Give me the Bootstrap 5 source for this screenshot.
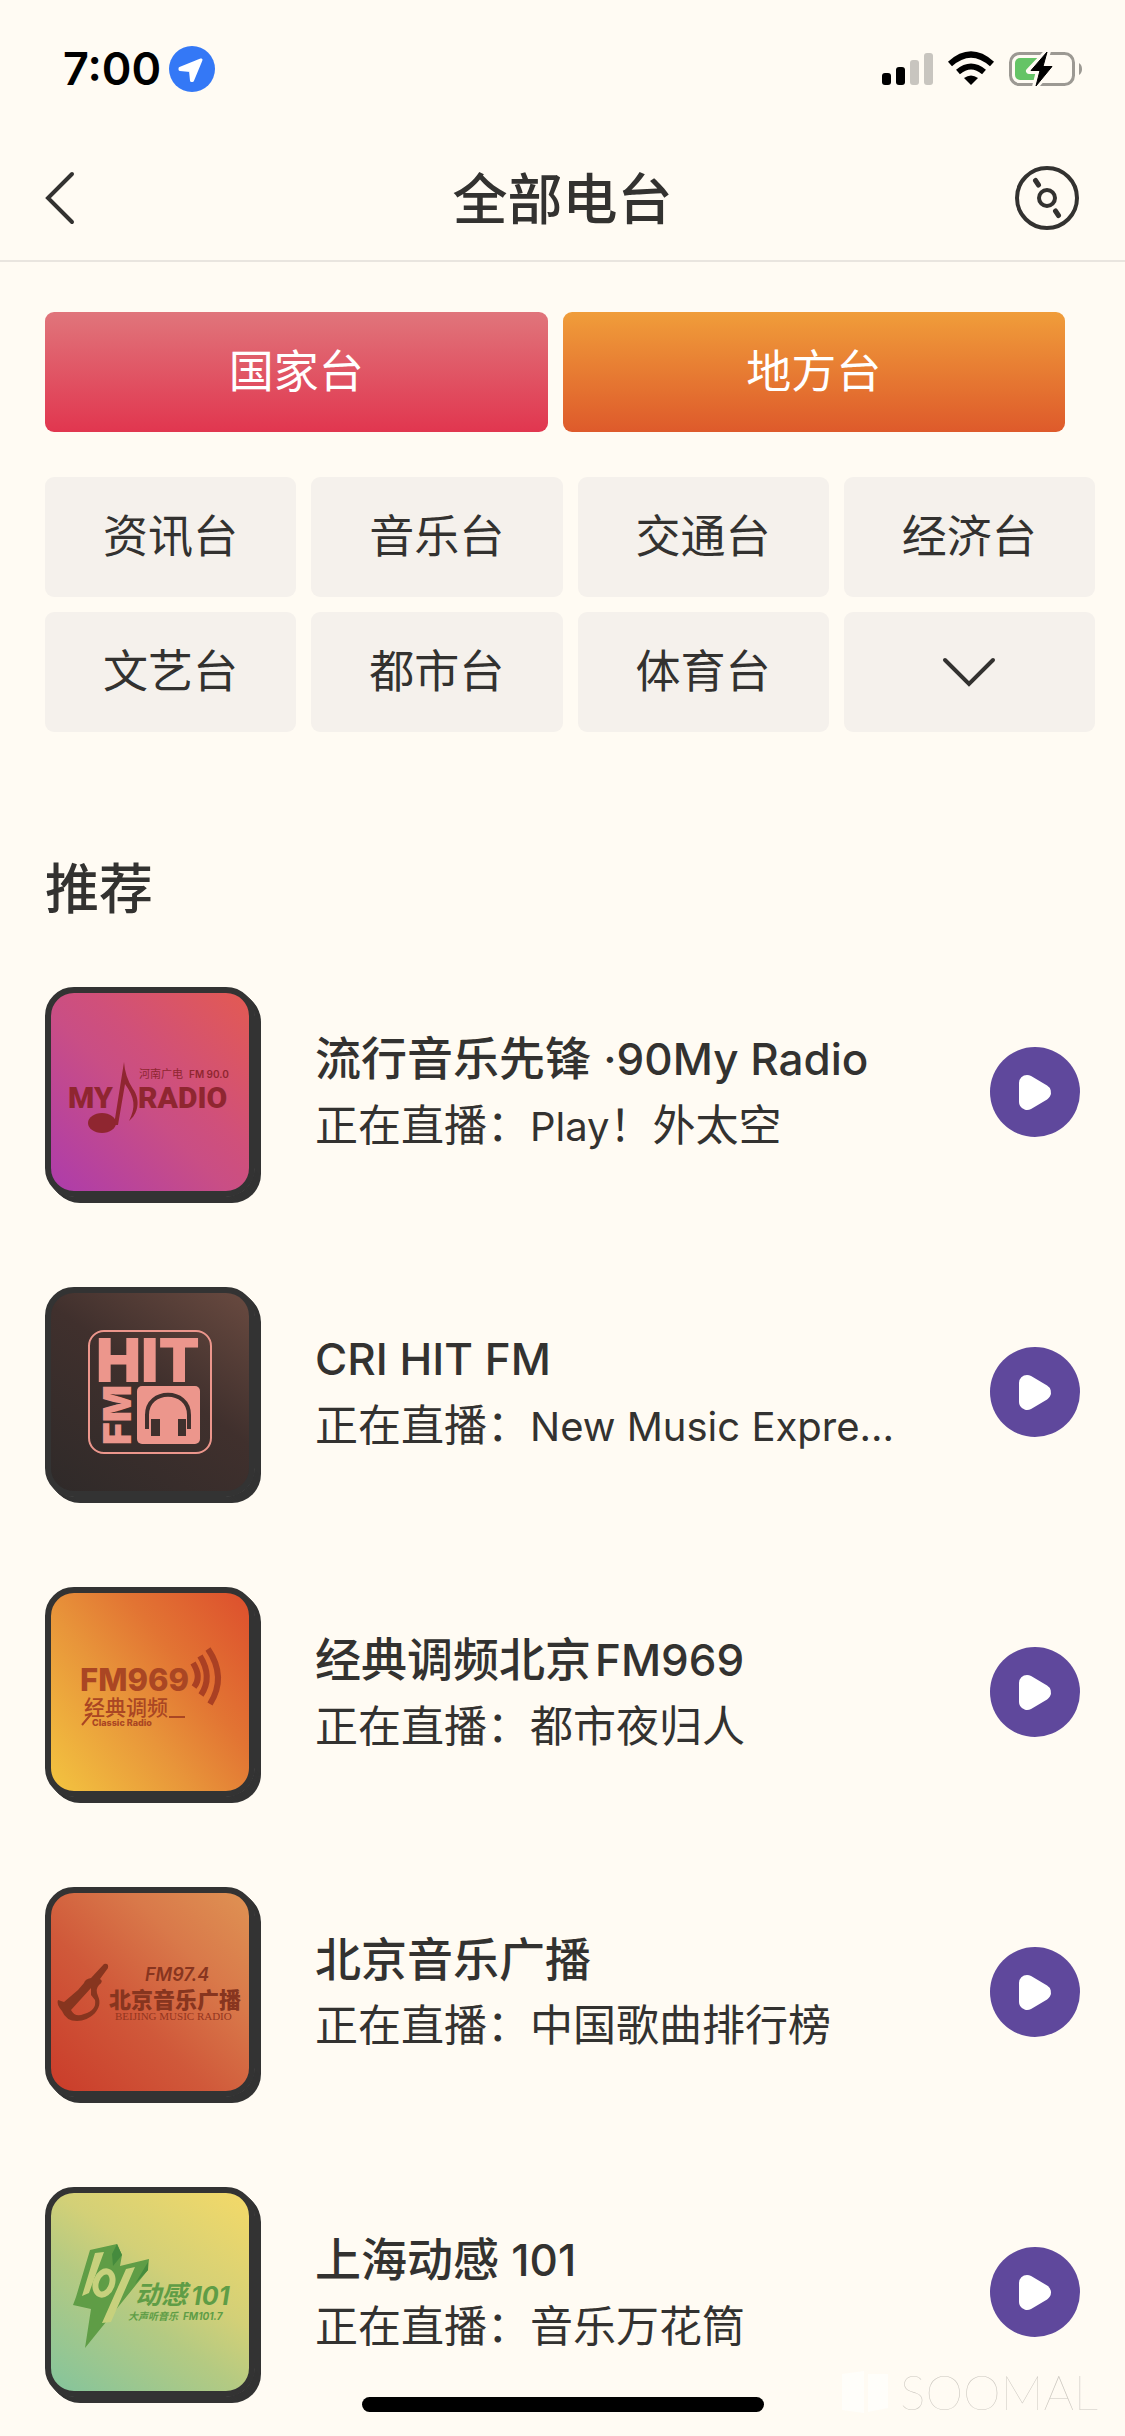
<!DOCTYPE html>
<html lang="zh-CN">
<head>
<meta charset="utf-8">
<meta name="viewport" content="width=device-width, initial-scale=1">
<title>全部电台</title>
<link href="https://cdn.jsdelivr.net/npm/bootstrap@5.3.0/dist/css/bootstrap.min.css" rel="stylesheet">
<style>
  body {
    background: #fffbf3;
    color: #333230;
    font-family: Inter, "Noto Sans CJK SC", sans-serif;
    font-size: 45px;
    line-height: 60px;
  }
  svg { display: block; flex: none; }
  .status-bar { height: 138px; padding: 0 43px 0 63px; color: #000; }
  .status-time { font-size: 45px; font-weight: 600; }
  .app-header { height: 124px; padding: 0 45px; border-bottom: 2px solid #e9e5df; }
  .header-side { width: 70px; }
  .icon-btn { border: 0; background: none; padding: 0; color: inherit; }
  .page-title { font-size: 55px; font-weight: 500; line-height: 72px; }
  .region-row { gap: 15px; padding: 50px 60px 45px 45px; }
  .region-btn, .kind-btn { height: 120px; border: 0; border-radius: 9px; padding: 0; font-size: 45px; line-height: 60px; }
  .region-btn, .region-btn:hover { color: #fff; }
  .region-national { background: linear-gradient(#e0757b, #e1364f); }
  .region-local { background: linear-gradient(#f09d3a, #de5a2b); }
  .kind-grid { display: grid; grid-template-columns: repeat(4, 1fr); gap: 15px; padding: 0 30px 0 45px; }
  .kind-btn { background: #f5f1ec; color: #333230; }
  .section-title { font-size: 54px; font-weight: 500; line-height: 72px; padding: 122px 45px 0; }
  .station-list { padding: 61px 45px 39px; gap: 90px; }
  .cover { width: 210px; height: 210px; border: 6px solid #333; border-radius: 29px; box-shadow: 1px 1px #333, 2px 2px #333, 3px 3px #333, 4px 4px #333, 5px 5px #333, 6px 6px #333; overflow: hidden; margin-right: 60px; }
  .cover-my { background: linear-gradient(45deg, #ad3cab, #c94e85 45%, #d0507a 60%, #e35a52); }
  .cover-hit { background: linear-gradient(35deg, #2f2a29, #40302d 55%, #694a40); }
  .cover-969 { background: linear-gradient(52deg, #f3c440, #e8953a 40%, #e27433 65%, #dd4f2d); }
  .cover-974 { background: linear-gradient(45deg, #ca3c2a, #d0593a 40%, #d9794a 70%, #df9253); }
  .cover-101 { background: linear-gradient(35deg, #84c49c, #b4ca82 40%, #d3d077 60%, #f4d968); }
  .station-name { font-size: 46px; font-weight: 500; line-height: 60px; margin: 0; }
  .station-name .latin { font-size: 44px; }
  .station-live { font-size: 43px; line-height: 60px; margin: 6px 0 0; }
  .station-live .latin { font-size: 40px; }
  .play-btn { width: 90px; height: 90px; border-radius: 50%; background: #5f489c; }
  .home-bar { position: fixed; left: 50%; bottom: 24px; width: 402px; height: 15px; margin-left: -201px; border-radius: 8px; background: #000; }
  .watermark { position: fixed; right: 27px; bottom: 14px; gap: 8px; color: #ccc8c0; font-family: Lato, sans-serif; font-weight: 100; font-size: 48px; line-height: 60px; }
</style>
</head>
<body>
<div class="status-bar d-flex align-items-center justify-content-between">
  <div class="d-flex align-items-center gap-2">
    <span class="status-time">7:00</span>
    <svg width="46" height="46" viewBox="0 0 46 46"><circle cx="23" cy="23" r="23" fill="#3478f6"/><path d="M32 14 11 22.500V23.500L21.500 24.500 22.500 34.500H23.500Z" fill="#fff" stroke="#fff" stroke-width="3" stroke-linejoin="round"/></svg>
  </div>
  <svg width="202" height="36" viewBox="0 0 202 36">
    <g><rect x="2" y="22" width="9" height="12" rx="3"/><rect x="16" y="16" width="9" height="18" rx="3"/><rect x="30" y="9" width="9" height="25" rx="3" fill="#c8c5bf"/><rect x="44" y="2" width="9" height="32" rx="3" fill="#c8c5bf"/></g>
    <path d="M91 34 84 27Q91 22 98 27Z"/>
    <path d="M78 21Q91 10 104 21M70 13Q91-6 112 13" fill="none" stroke="#000" stroke-width="6"/>
    <rect x="130.500" y="2.500" width="63" height="31" rx="9" fill="none" stroke="#9c9993" stroke-width="3"/>
    <rect x="135" y="7" width="30" height="22" rx="5" fill="#65c466"/>
    <path d="M199 12Q202 14 202 18T199 24Z" fill="#9c9993"/>
    <path d="M168 0 149 20H159L155 36 174 15H163.500Z" stroke="#fffbf3" stroke-width="6" stroke-linejoin="round"/><path d="M167 1 151 19.500H160L156 35 172 15.500H163Z" stroke="#000" stroke-linejoin="round"/>
  </svg>
</div>
<header class="app-header d-flex align-items-center justify-content-between">
  <div class="header-side d-flex"><button class="icon-btn" type="button" aria-label="返回"><svg width="32" height="56" viewBox="0 0 32 56"><path d="M27 3 3 27 27 51" fill="none" stroke="currentColor" stroke-width="4" stroke-linecap="round"/></svg></button></div>
  <h1 class="page-title m-0">全部电台</h1>
  <div class="header-side d-flex justify-content-end"><button class="icon-btn" type="button" aria-label="正在播放"><svg width="66" height="66" viewBox="0 0 66 66" fill="none" stroke="currentColor" stroke-width="4"><circle cx="33" cy="32" r="30"/><circle cx="33" cy="32" r="8"/><path d="m21.500 14.500 3 4.500m17 26 3 4.500" stroke-width="5" stroke-linecap="round"/></svg></button></div>
</header>
<main>
  <div class="region-row d-flex">
    <button class="btn region-btn region-national flex-fill w-50" type="button">国家台</button>
    <button class="btn region-btn region-local flex-fill w-50" type="button">地方台</button>
  </div>
  <div class="kind-grid">
    <button class="btn kind-btn" type="button">资讯台</button>
    <button class="btn kind-btn" type="button">音乐台</button>
    <button class="btn kind-btn" type="button">交通台</button>
    <button class="btn kind-btn" type="button">经济台</button>
    <button class="btn kind-btn" type="button">文艺台</button>
    <button class="btn kind-btn" type="button">都市台</button>
    <button class="btn kind-btn" type="button">体育台</button>
    <button class="btn kind-btn" type="button" aria-label="展开"><svg class="mx-auto" width="56" height="32" viewBox="0 0 56 32"><path d="M4 4 28 28 52 4" fill="none" stroke="currentColor" stroke-width="4" stroke-linecap="round"/></svg></button>
  </div>
  <h2 class="section-title m-0">推荐</h2>
  <div class="station-list d-flex flex-column">
    <article class="d-flex align-items-center">
      <div class="cover cover-my flex-shrink-0"><svg width="198" height="198" viewBox="0 0 198 198" fill="#8f2630">
        <g font-family="Roboto" font-weight="900"><text x="17" y="115" font-size="30">MY</text><text x="87" y="115" font-size="30">RADIO</text></g>
        <ellipse cx="51" cy="130" rx="14" ry="10"/><path d="M63 132 73 69Q74 84 82 96C90 107 87 121 78 128C85 114 84 105 74 91L67 132Z"/>
        <text x="88" y="85" font-family="Noto Sans CJK SC" font-size="11">河南广电</text><text x="138" y="85" font-family="Inter" font-weight="600" font-size="10">FM 90.0</text></svg></div>
      <div class="flex-grow-1 text-truncate"><h3 class="station-name text-truncate">流行音乐先锋 <span class="latin">·90My Radio</span></h3><p class="station-live text-truncate">正在直播：<span class="latin">Play</span>！外太空</p></div>
      <button class="icon-btn play-btn" type="button" aria-label="播放"><svg width="90" height="90" viewBox="0 0 90 90"><path d="M37 36 53 45.500 37 55Z" fill="#fff" stroke="#fff" stroke-width="16" stroke-linejoin="round"/></svg></button>
    </article>
    <article class="d-flex align-items-center">
      <div class="cover cover-hit flex-shrink-0"><svg width="198" height="198" viewBox="0 0 198 198" fill="#ec968c">
        <rect x="38" y="38" width="122" height="122" rx="15" fill="none" stroke="#ec968c" stroke-width="2"/>
        <text x="45" y="89" font-family="Inter" font-weight="900" font-size="60">HIT</text>
        <text transform="translate(80 152) rotate(-90)" font-family="Inter" font-weight="900" font-size="39">FM</text>
        <rect x="86" y="93" width="63" height="58" rx="5"/><path d="M96 136V122C96 95 138 95 138 122V136" fill="none" stroke="#40302d" stroke-width="4"/><path d="M100 126H109V143H100ZM127 126H135V143H127Z" fill="#40302d"/></svg></div>
      <div class="flex-grow-1 text-truncate"><h3 class="station-name text-truncate"><span class="latin">CRI HIT FM</span></h3><p class="station-live text-truncate">正在直播：<span class="latin">New Music Expre...</span></p></div>
      <button class="icon-btn play-btn" type="button" aria-label="播放"><svg width="90" height="90" viewBox="0 0 90 90"><path d="M37 36 53 45.500 37 55Z" fill="#fff" stroke="#fff" stroke-width="16" stroke-linejoin="round"/></svg></button>
    </article>
    <article class="d-flex align-items-center">
      <div class="cover cover-969 flex-shrink-0"><svg width="198" height="198" viewBox="0 0 198 198" fill="#aa4623">
        <text x="29" y="98" font-family="Inter" font-weight="800" font-size="31">FM969</text>
        <text x="33" y="122" font-family="Noto Sans CJK SC" font-size="21" font-weight="500">经典调频</text><path d="M31 132 41 120M118 124H134" stroke="#aa4623" stroke-width="2"/>
        <text x="41" y="133" font-family="Inter" font-weight="800" font-size="9">Classic Radio</text>
        <path d="M142 70Q151 84 143 94M149 63Q162 84 150 102M157 56Q176 84 159 111" fill="none" stroke="#aa4023" stroke-width="6"/></svg></div>
      <div class="flex-grow-1 text-truncate"><h3 class="station-name text-truncate">经典调频北京<span class="latin ms-1">FM969</span></h3><p class="station-live text-truncate">正在直播：都市夜归人</p></div>
      <button class="icon-btn play-btn" type="button" aria-label="播放"><svg width="90" height="90" viewBox="0 0 90 90"><path d="M37 36 53 45.500 37 55Z" fill="#fff" stroke="#fff" stroke-width="16" stroke-linejoin="round"/></svg></button>
    </article>
    <article class="d-flex align-items-center">
      <div class="cover cover-974 flex-shrink-0"><svg width="198" height="198" viewBox="0 0 198 198" fill="#87351f">
        <path d="M53 71Q58 70 57 75L49 86Q53 88 48 92Q44 96 47 103C53 116 39 128 26 128Q15 128 11 118Q5 111 7 107L13 109 27 97 33 90Q34 86 40 85ZM40 95 20 117Q24 125 33 121Q46 117 44 107L40 102Z" fill-rule="evenodd"/>
        <text x="94" y="88" font-family="Inter" font-style="italic" font-weight="600" font-size="18">FM97.4</text>
        <text x="58" y="115" font-family="Noto Sans CJK SC" font-weight="900" font-size="22">北京音乐广播</text>
        <text x="64" y="127" font-family="Liberation Serif" font-size="11" fill="#93351f">BEIJING MUSIC RADIO</text></svg></div>
      <div class="flex-grow-1 text-truncate"><h3 class="station-name text-truncate">北京音乐广播</h3><p class="station-live text-truncate">正在直播：中国歌曲排行榜</p></div>
      <button class="icon-btn play-btn" type="button" aria-label="播放"><svg width="90" height="90" viewBox="0 0 90 90"><path d="M37 36 53 45.500 37 55Z" fill="#fff" stroke="#fff" stroke-width="16" stroke-linejoin="round"/></svg></button>
    </article>
    <article class="d-flex align-items-center">
      <div class="cover cover-101 flex-shrink-0"><svg width="198" height="198" viewBox="0 0 198 198" fill="#5f9d46">
        <path d="M39 57 66 51 71 62 69 73 98 66 97 77 34 155 40 116 22 112 25 104Z"/><path d="M66 51 71 62 62 73 61 61ZM97 69V77L84 91Z" fill="#458b3d"/>
        <path d="M44 60 53 59 38 100 31 103ZM75 76 84 74 60 129 51 130Z" fill="#c7d17d"/><ellipse cx="53" cy="90" rx="8" ry="12" transform="rotate(20 53 90)" fill="none" stroke="#c7d17d" stroke-width="6"/>
        <g font-style="italic" font-weight="700"><text x="84" y="111" font-family="Noto Sans CJK SC" font-size="26">动感</text><text x="140" y="112" font-family="Inter" font-size="25">101</text><text x="77" y="127" font-family="Noto Sans CJK SC" font-size="10">大声听音乐</text><text x="132" y="127" font-family="Inter" font-size="10">FM101.7</text></g></svg></div>
      <div class="flex-grow-1 text-truncate"><h3 class="station-name text-truncate">上海动感 <span class="latin">101</span></h3><p class="station-live text-truncate">正在直播：音乐万花筒</p></div>
      <button class="icon-btn play-btn" type="button" aria-label="播放"><svg width="90" height="90" viewBox="0 0 90 90"><path d="M37 36 53 45.500 37 55Z" fill="#fff" stroke="#fff" stroke-width="16" stroke-linejoin="round"/></svg></button>
    </article>
  </div>
</main>
<div class="watermark d-flex align-items-center"><svg width="52" height="44" viewBox="0 0 52 44" fill="#fffefa"><path d="M2 4 24 1V43L2 40Z"/><path d="M28 4H48V38L28 42Z"/></svg><span>SOOMAL</span></div>
<div class="home-bar"></div>
<script src="https://cdn.jsdelivr.net/npm/bootstrap@5.3.0/dist/js/bootstrap.bundle.min.js"></script>
</body>
</html>
